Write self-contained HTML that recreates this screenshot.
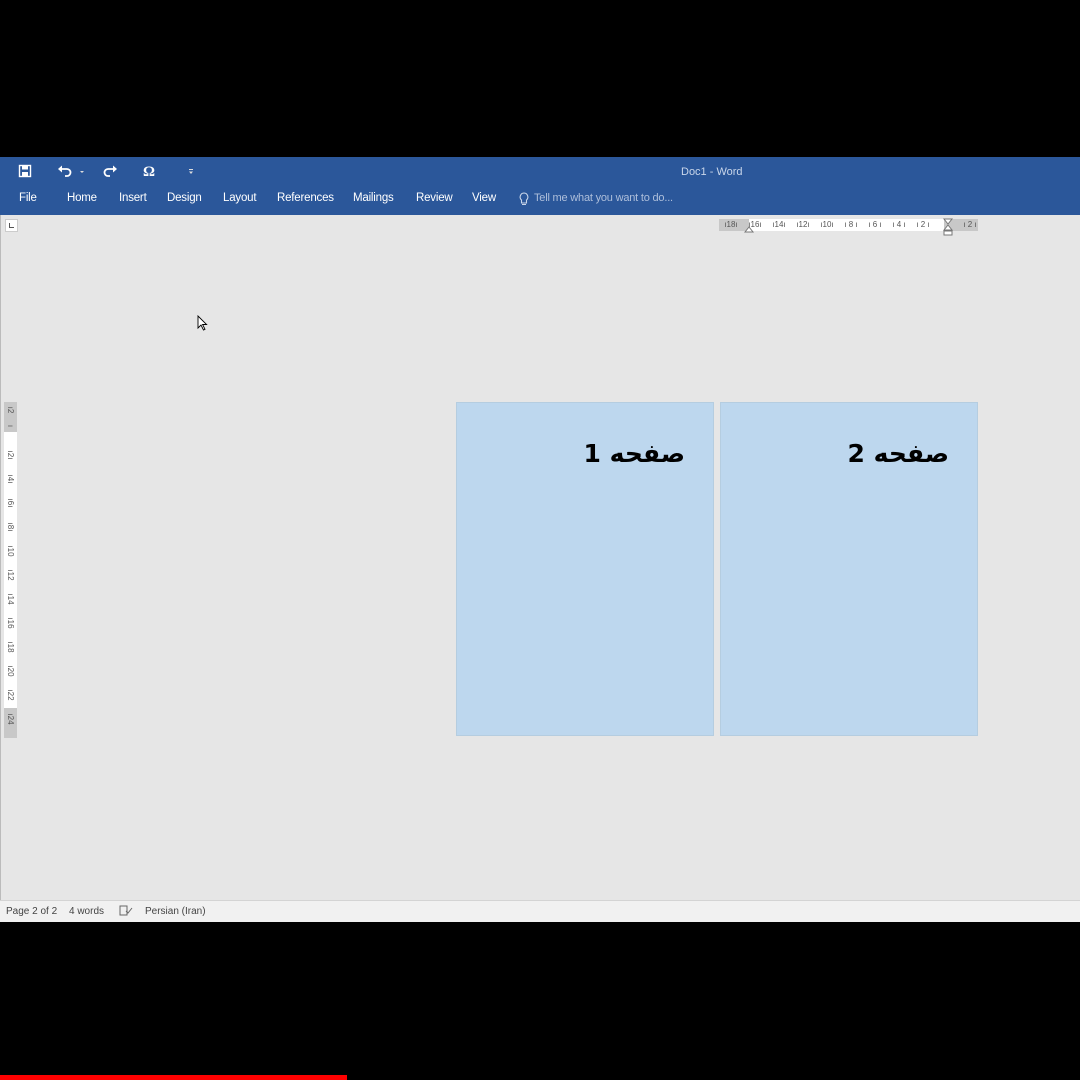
<!DOCTYPE html>
<html><head><meta charset="utf-8"><style>
*{margin:0;padding:0;box-sizing:border-box}
body{width:1080px;height:1080px;background:#000;position:relative;overflow:hidden;font-family:"Liberation Sans",sans-serif}
.a{position:absolute}
#bar{left:0;top:157px;width:1080px;height:58px;background:#2b579a}
#doc{left:0;top:215px;width:1080px;height:685px;background:#e6e6e6;border-left:1px solid #bbb}
#status{left:0;top:900px;width:1080px;height:22px;background:#f1f1f1;border-top:1px solid #d4d4d4;font-size:10px;color:#444}
.tab{top:192px;font-size:11.5px;color:#fff;letter-spacing:-0.2px}
.page{top:402px;width:258px;height:334px;background:#bdd7ee;border:1px solid #b5cde0}
.ptxt{position:absolute;top:36px;right:28px;font-family:"DejaVu Sans",sans-serif;font-weight:bold;font-size:25px;direction:rtl;color:#000}
.h{position:absolute;top:220px;font-size:8px;color:#555;transform:translateX(-50%)}
.v{position:absolute;left:5px;font-size:8px;color:#555;transform-origin:0 0;transform:rotate(90deg) translate(-50%,-10px);white-space:nowrap}
</style></head><body>
<div id="bar" class="a"></div>
<svg class="a" style="left:17px;top:163px" width="180" height="16" viewBox="0 0 180 16">
<rect x="2.5" y="2.5" width="11" height="11" fill="none" stroke="#fff" stroke-width="1.4"/><rect x="5" y="2.5" width="6" height="4" fill="#fff"/><rect x="5" y="9" width="6" height="4.5" fill="#fff"/>
<path d="M44 6 h6 a3.5 3.5 0 0 1 0 7 h-2" fill="none" stroke="#fff" stroke-width="1.8"/><path d="M41 6 l4-3.5 v7z" fill="#fff"/>
<path d="M63 8 l2 2 2-2z" fill="#ddd"/>
<path d="M97 6 h-6 a3.5 3.5 0 0 0 0 7 h2" fill="none" stroke="#fff" stroke-width="1.8"/><path d="M100 6 l-4-3.5 v7z" fill="#fff"/>
<text x="126" y="13" font-family="Liberation Serif" font-weight="bold" font-size="15" fill="#fff">Ω</text>
<rect x="172" y="6" width="4" height="1" fill="#ddd"/><path d="M172 8.5 h4 l-2 2.5z" fill="#ddd"/>
</svg>
<div class="a" style="left:681px;top:166px;font-size:11px;color:#c9d6ea">Doc1 - Word</div>
<div class="a tab" style="left:19px">File</div>
<div class="a tab" style="left:67px">Home</div>
<div class="a tab" style="left:119px">Insert</div>
<div class="a tab" style="left:167px">Design</div>
<div class="a tab" style="left:223px">Layout</div>
<div class="a tab" style="left:277px">References</div>
<div class="a tab" style="left:353px">Mailings</div>
<div class="a tab" style="left:416px">Review</div>
<div class="a tab" style="left:472px">View</div>
<svg class="a" style="left:518px;top:192px" width="12" height="14"><path d="M6 1 a4 4 0 0 1 2.5 7 v3 h-5 v-3 A4 4 0 0 1 6 1z M4 12.5 h4" fill="none" stroke="#c9d6ea" stroke-width="1.1"/></svg>
<div class="a tab" style="left:534px;color:#aebfdb;font-size:11px">Tell me what you want to do...</div>
<div id="doc" class="a"></div>
<div class="a" style="left:5px;top:219px;width:13px;height:13px;background:#fff;border:1px solid #ccc"></div>
<div class="a" style="left:9px;top:223px;width:5px;height:5px;border-left:1px solid #555;border-bottom:1px solid #555"></div>
<!-- h ruler -->
<div class="a" style="left:719px;top:219px;width:259px;height:12px;background:#fff"></div>
<div class="a" style="left:719px;top:219px;width:30px;height:12px;background:#c8c8c8"></div>
<div class="a" style="left:944px;top:219px;width:34px;height:12px;background:#c8c8c8"></div>
<span class="h" style="left:731px">ı18ı</span><span class="h" style="left:755px">ı16ı</span><span class="h" style="left:779px">ı14ı</span><span class="h" style="left:803px">ı12ı</span><span class="h" style="left:827px">ı10ı</span><span class="h" style="left:851px">ı 8 ı</span><span class="h" style="left:875px">ı 6 ı</span><span class="h" style="left:899px">ı 4 ı</span><span class="h" style="left:923px">ı 2 ı</span><span class="h" style="left:970px">ı 2 ı</span>
<svg class="a" style="left:743px;top:218px" width="212" height="18"><path d="M2 14 l4-5 4 5z" fill="#fff" stroke="#777"/><path d="M201 1 h8 l-4 5z M201 12 l4-5 4 5z" fill="#fff" stroke="#777"/><rect x="201" y="13" width="8" height="4" fill="#fff" stroke="#777"/></svg>
<!-- v ruler -->
<div class="a" style="left:4px;top:402px;width:13px;height:336px;background:#fff"></div>
<div class="a" style="left:4px;top:402px;width:13px;height:30px;background:#c8c8c8"></div>
<div class="a" style="left:4px;top:708px;width:13px;height:30px;background:#c8c8c8"></div>
<span class="v" style="top:410px">ı2</span><span class="v" style="top:426px">ı</span><span class="v" style="top:455px">ı2ı</span><span class="v" style="top:479px">ı4ı</span><span class="v" style="top:503px">ı6ı</span><span class="v" style="top:527px">ı8ı</span><span class="v" style="top:551px">ı10</span><span class="v" style="top:575px">ı12</span><span class="v" style="top:599px">ı14</span><span class="v" style="top:623px">ı16</span><span class="v" style="top:647px">ı18</span><span class="v" style="top:671px">ı20</span><span class="v" style="top:695px">ı22</span><span class="v" style="top:719px">ı24</span>
<svg class="a" style="left:197px;top:315px" width="12" height="16"><path d="M1 1 v12 l3-3 2.5 5 1.5-.7 -2.4-4.8 h4z" fill="#fff" stroke="#000" stroke-width="0.9"/></svg>
<div class="a page" style="left:456px"><div class="ptxt">صفحه 1</div></div>
<div class="a page" style="left:720px"><div class="ptxt">صفحه 2</div></div>
<div id="status" class="a">
<span class="a" style="left:6px;top:5px">Page 2 of 2</span>
<span class="a" style="left:69px;top:5px">4 words</span>
<svg class="a" style="left:119px;top:4px" width="14" height="12"><rect x="1" y="1" width="7" height="9" fill="none" stroke="#666"/><path d="M7 6 l2 2 4-5" fill="none" stroke="#666"/></svg>
<span class="a" style="left:145px;top:5px">Persian (Iran)</span>
</div>
<div class="a" style="left:0;top:1075px;width:347px;height:5px;background:#f00"></div>
</body></html>
